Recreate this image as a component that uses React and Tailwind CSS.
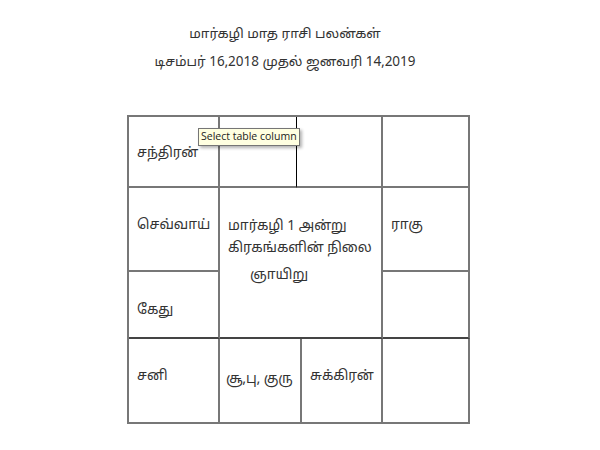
export default function App() {
  const font = { fontFamily: '"Noto Sans Tamil", "Noto Sans", "Liberation Sans", sans-serif' };
  return (
    <div className="w-[600px] h-[450px] bg-white text-[#333] relative" style={font}>
      <div className="pt-[21px] pr-[30px] text-center text-[13.5px] leading-[28px]">
        <p>மார்கழி மாத ராசி பலன்கள்</p>
        <p>டிசம்பர் 16,2018 முதல் ஜனவரி 14,2019</p>
      </div>

      <div className="ml-[127px] mt-[38px] w-[343px] border-l-2 border-t-2 border-[#777] text-[13.8px] whitespace-nowrap">
        {/* top row */}
        <div className="flex h-[71px]">
          <div className="w-[91px] border-r-2 border-b-2 border-[#777] flex items-center pl-[8px] pt-[6px]">சந்திரன்</div>
          <div className="w-[77px] border-r border-b-2 border-[#777] border-r-black"></div>
          <div className="w-[86px] border-r-2 border-b-2 border-[#777]"></div>
          <div className="w-[87px] border-r-2 border-b-2 border-[#777]"></div>
        </div>

        {/* middle row */}
        <div className="flex h-[151px]">
          <div className="w-[91px] flex flex-col">
            <div className="h-[84px] border-r-2 border-b-2 border-[#777] flex items-center pl-[8px] pb-[6px]">செவ்வாய்</div>
            <div className="flex-1 border-r-2 border-b-2 border-[#777] border-b-[#444] flex items-center pl-[8px] pt-[14px]">கேது</div>
          </div>
          <div className="w-[163px] border-r-2 border-b-2 border-[#777] border-b-[#444] pl-[8px] pt-[28px] leading-[22px]">
            <p>மார்கழி 1 அன்று</p>
            <p>கிரகங்களின் நிலை</p>
            <p className="pl-[22px] pt-[5px]">ஞாயிறு</p>
          </div>
          <div className="w-[87px] flex flex-col">
            <div className="h-[84px] border-r-2 border-b-2 border-[#777] flex items-center pl-[8px] pb-[6px]">ராகு</div>
            <div className="flex-1 border-r-2 border-b-2 border-[#777] border-b-[#444]"></div>
          </div>
        </div>

        {/* bottom row */}
        <div className="flex h-[85px]">
          <div className="w-[91px] border-r-2 border-b-2 border-[#777] flex items-center pl-[8px] pb-[6px]">சனி</div>
          <div className="w-[82px] border-r-2 border-b-2 border-[#777] flex items-center pl-[6px]">சூ,பு, குரு</div>
          <div className="w-[81px] border-r-2 border-b-2 border-[#777] flex items-center pl-[8px] pb-[6px]">சுக்கிரன்</div>
          <div className="w-[87px] border-r-2 border-b-2 border-[#777]"></div>
        </div>
      </div>

      <div
        className="absolute left-[198px] top-[128px] h-[18px] px-[2px] flex items-center bg-[#ffffe1] border border-[#767676] shadow-[2px_2px_3px_rgba(0,0,0,0.3)] text-[10.5px] text-[#222]"
        style={{ fontFamily: '"Open Sans", "Liberation Sans", sans-serif' }}
      >
        Select table column
      </div>
    </div>
  );
}
